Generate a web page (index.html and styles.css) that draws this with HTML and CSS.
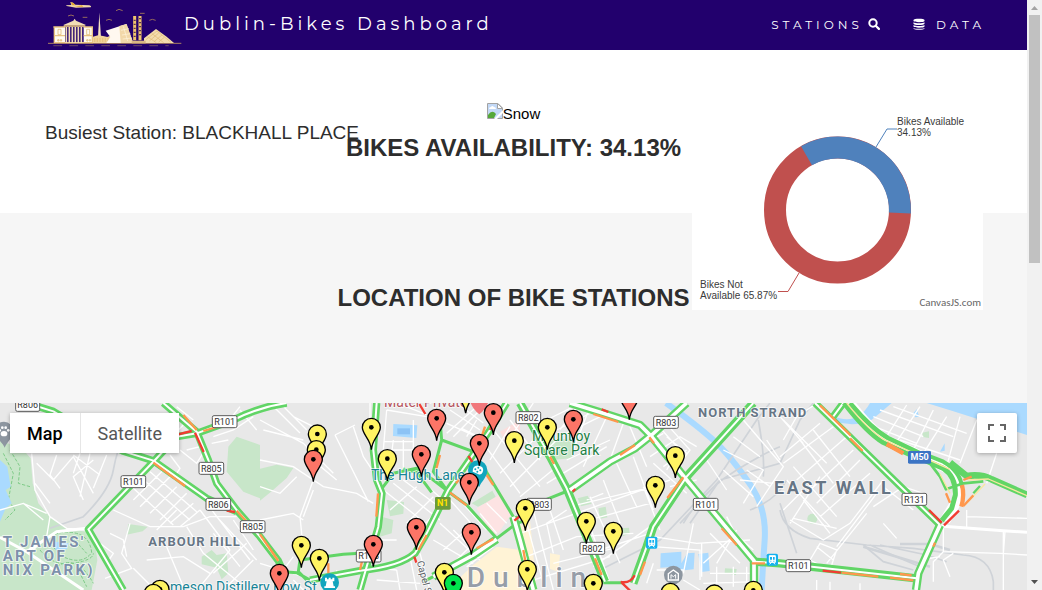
FILE: index.html
```html
<!DOCTYPE html>
<html lang="en">
<head>
<meta charset="utf-8">
<title>Dublin-Bikes Dashboard</title>
<link rel="stylesheet" href="styles.css">
</head>
<body>
<div class="page">
  <header class="navbar">
    <a class="brand" href="#top">
      <svg class="skyline" viewBox="0 0 450 150" aria-hidden="true">
        <path d="M24 133H424" stroke="#a97f62" stroke-width="3"/>
        <path d="M40 140H386" stroke="#5b3969" stroke-width="4" stroke-dasharray="26 22"/>
        <path d="M78 19l16-1-3-9 8 2 7 6 42 2q8 3 4 6l-44 1-28-5z" fill="#f0d7a8"/>
        <path d="M92 10l7 1 8 8h-10zM104 23l22-4 4 4z" fill="#e3a72b"/>
        <path d="M228 35l9-4 11 4M198 64l9-3 9 3M328 64l9-3 10 3M84 51l9-3 9 3M128 55h14M300 43h14" stroke="#94695d" stroke-width="3" fill="none"/>
        <path d="M42 84h33v48H42zM131 84h28v48h-28z" fill="#fffaf0"/>
        <path d="M40 84h35M131 84h28M42 110h33M131 110h28M42 131h117M43 84v48M157 84v48" stroke="#e9c483" stroke-width="4"/>
        <path d="M54 91h9v16h-9zM140 91h9v16h-9zM53 122h4v4h-4zM61 122h4v4h-4zM140 122h4v4h-4zM148 122h4v4h-4z" fill="none" stroke="#dcb05f" stroke-width="2"/>
        <path d="M70 78l30-13 4-6 4 6 30 13z" fill="#f3ddb6"/>
        <path d="M71 81h65" stroke="#e9c483" stroke-width="5"/>
        <path d="M79 84v48M88 84v48M97 84v48M106 84v48M115 84v48M124 84v48" stroke="#f3ddb6" stroke-width="5"/>
        <path d="M174 115l4-74 5 74z" fill="#f8e3c2"/>
        <path d="M159 113l15-4 15 2 13 3 12-5v23h-55z" fill="#f1d39a"/>
        <path d="M162 120h50M162 126h50" stroke="#ddab50" stroke-width="2" stroke-dasharray="4 4"/>
        <path d="M197 95l62-20 20 57h-80l12-18z" fill="#fff8f0"/>
        <path d="M238 81l22-6 20 57h-38z" fill="#f2d8a9"/>
        <path d="M250 82l13 44M243 94l24-5M246 108l25-4M248 120l28-3" stroke="#fff4dc" stroke-width="2"/>
        <path d="M284 51v73M300 51v73" stroke="#efc46d" stroke-width="9"/>
        <path d="M284 62v60M300 57v60" stroke="#5d3552" stroke-width="6" stroke-dasharray="4 8"/>
        <path d="M312 132v-14l36-28 32 23 22 19z" fill="#f3dcae"/>
        <path d="M318 122l33-26 42 34M328 126l28-24M342 128l24-20M356 129l17-14M322 113l27 18M335 103l36 28" stroke="#e0bb76" stroke-width="2" fill="none"/>
        <path d="M275 125h42v8h-42z" fill="#d9b783"/>
      </svg>
      <span>Dublin-Bikes Dashboard</span>
    </a>
    <nav class="links">
      <a href="#stations">STATIONS
        <svg class="icon" viewBox="0 0 12 12" aria-hidden="true"><circle cx="5" cy="5" r="3.7" fill="none" stroke="currentColor" stroke-width="2"/><path d="M7.7 7.7l3.2 3.2" stroke="currentColor" stroke-width="2.2" stroke-linecap="round"/></svg>
      </a>
      <a href="#data">
        <svg class="icon" viewBox="0 0 12 12" aria-hidden="true"><path d="M.5 2C.5.4 11.500.4 11.500 2v1c0 1.600-11 1.600-11 0zM.5 4.300c1.800 1.300 9.200 1.300 11 0v1.500c0 1.600-11 1.600-11 0zM.5 7.100c1.800 1.300 9.200 1.300 11 0v1.500c0 1.600-11 1.600-11 0zM.5 9.900c1.800 1.200 9.200 1.200 11 0v.6c0 1.700-11 1.700-11 0z" fill="currentColor"/></svg>
        DATA</a>
    </nav>
  </header>

  <main id="top">
    <section class="availability">
      <p class="busiest">Busiest Station: BLACKHALL PLACE</p>
      <div class="photo">
        <svg viewBox="0 0 16 16" aria-hidden="true"><path d="M.5.5h10.500l4.500 4.500v10.500H.5z" fill="#c3d9f7" stroke="#a3a3a3"/><path d="M2 6q0-2 2-2 1-2 3 0 2 0 2 2z" fill="#fff"/><path d="M1 15v-3q4-6 8-1l-2 4z" fill="#55a839"/><path d="M7 16l9-9v3l-6 6z" fill="#fff"/><path d="M10.500.5v5h5z" fill="#fff" stroke="#a3a3a3"/></svg><span>Snow</span>
      </div>
      <h2>BIKES AVAILABILITY: 34.13%</h2>
      <figure class="chart">
        <svg viewBox="692 110 291 200" role="img" aria-label="Bike availability">
          <circle cx="837.500" cy="210" r="62.500" fill="none" stroke="#c0504e" stroke-width="22"/>
          <path d="M806.500 155.700A62.500 62.500 0 0 1 899.900 213" fill="none" stroke="#4f81bc" stroke-width="22"/>
          <path d="M876 147l11-18h10" fill="none" stroke="#4f81bc"/>
          <path d="M799 273l-11 18.500h-10" fill="none" stroke="#c0504e"/>
          <text class="slice" x="897" y="125">Bikes Available<tspan x="897" dy="11">34.13%</tspan></text>
          <text class="slice" x="700" y="288">Bikes Not<tspan x="700" dy="11">Available 65.87%</tspan></text>
          <text class="credit" x="981" y="306">CanvasJS.com</text>
        </svg>
      </figure>
    </section>
    <section class="location" id="stations"><h2>LOCATION OF BIKE STATIONS</h2></section>

    <section class="map">
      <svg class="tiles" viewBox="0 9 3081 561" preserveAspectRatio="xMinYMin slice" role="img" aria-label="Map of Dublin bike stations">
        <defs>
          <g id="pin" stroke="#000" stroke-width="4"><path d="M0 67C-2 35-27 22-27 0A27 27 0 0 1 27 0C27 22 2 35 0 67z"/><circle r="7" fill="#000" stroke="none"/></g>
          <g id="train"><rect x="-17" y="-18" width="34" height="36" rx="5" fill="#14b1ee"/><path d="M-9-12H9V8H-9zM-8 14l5-6M8 14l-5-6" fill="#fff" stroke="#fff" stroke-width="3"/><path d="M-7-8H-1V0H-7zM2-8H7V0H2zM-6 3h3v3h-3zM3 3h3v3H3z" fill="#14b1ee"/></g>
        </defs>
        <rect width="3081" height="600" fill="#e8e8e8"/>

        <!-- parks -->
        <g fill="#c8e6c9">
          <path d="M0 120L70 150 92 175 98 250 115 310 150 350 200 385 262 396 285 430 292 480 275 570H0z"/>
          <path d="M685 140l25-30 70 25v160l-50-20-50-60zM780 206l50-12 50 10-20 30-45 40-35 28z"/>
          <path d="M385 372l58 8-15 14-48 10zM605 470l30-20 15 15 30-5 5 60-20 18-15-35-45-10z"/>
          <path d="M1160 300l52 6-2 35-40 8zM1145 350l35 10-5 40-35 10z"/>
          <path d="M1650 120l75-5-10 60-60 5z"/><path d="M1415 310l62-38 12 22-55 26zM1733 295l30-8 12 24-32 8zM1795 325l22-5 5 32-22 4zM1865 385l22-2 2 18-22 8zM2175 505l35 2-2 18-34-6zM2767 98l20-4v20l-18-3z"/>
          <circle cx="2437" cy="356" r="15"/>
        </g>
        <path d="M10 160l30 60-15 80 20 30-30 30M30 150l30 50-5 50 35 10M140 420q30-30 80-22t55 60q-30 40-90 10zM120 450q40 50 100 40t60-30M170 500q60-40 110 50M230 500l30 60M215 410l45 50" fill="none" stroke="#7fcb88" stroke-width="3" stroke-dasharray="10 5"/>

        <!-- water -->
        <g fill="#aadaff">
          <path d="M0 180l22 20 10 60-15 10 18 40-18 15-17 40zM165 425l40 5-4 18-35 2zM1180 72l72 4-3 38-70-6z"/>
          <path d="M2780 9l80 25 80 25 141 46V9zM2500 48q70 32 110-39h65q-40 35-60 50-50 25-115 4z"/>
          <path d="M1982 460l62-5v35l18-30 22-2-3 50-50 5-10-12-40 2zM2095 462l30-4 4 55-25 3zM2740 40l10-12 8 22-12 2zM2820 155l14-25v22z"/>
        </g>
        <path d="M1998 9Q2090 75 2140 120T2255 260Q2300 330 2294 420T2285 570" fill="none" stroke="#aadaff" stroke-width="18"/>
        <path d="M1192 85h38v18h-38z" fill="#8cc3f5"/>
        <path d="M1430 325l75-45 30 60-40 60-20 5z" fill="#fde3e3"/>
        <path d="M1500 95l60-35v60l-40 15z" fill="#fbdedd"/>
        <path d="M1340 570l80-75 70-55 70 10 10-70 20-20 20 210z" fill="#fff3d6"/>
        <path d="M1545 380l40-10 15 70-40 10zM1650 460l30 5-5 50-25-8z" fill="#fff3d6"/>

        <!-- railway -->
        <g fill="none" stroke="#cfd3d8" stroke-width="5">
          <path d="M385 70Q350 150 340 210T250 350L150 385M1800 510L1980 420 2150 240 2270 60 2310 9M2040 370l120-130 180-50 60-130 40-51M2050 370q60-100 160-160t130-70M2275 60q20 110 15 170M2160 240l-90 130M2250 330q80-30 110-90M2340 330q10 60 90 85l170 20 140 10 150 20q80 5 90 80v30M2340 310q20 60 50 150M2590 435l60 50 90 25M2610 435l90 40 60 25M2640 435l140 30 60 20"/>
          <path d="M2590 440l200 60M2700 432h90l60 18" stroke-width="8"/>
        </g>

        <!-- local streets -->
        <g class="streets">
          <path d="M95 160l10 110 45 80 50 35 65 5M150 350l-10 60-50 50M0 330l70-20 70 30M70 310l60 50M105 250l45 60M110 190l50 50 60-70 60 110M170 165l-20 60 30 40M220 165l80 60M240 160l-20 60M250 300l-30-70 60-50M270 160l-30 130M340 330l110 50 100 0 80-30 80 0M390 370l-25 90 30 45-80 30M320 165l-40 100M300 430l40 30-20 30M330 400l40 20 10 50"/>
          <path d="M0 412L80 455 250 570M80 455l90-60 90-10" stroke-width="9"/>
          <path d="M400 300l90-90M420 320l90-90M450 340l80-80M480 360l80-80M510 370l70-60M540 380l60-50M420 230l150 130M400 265l120 110M450 215l140 120M470 390l60-60M640 400l80 100M600 330l90 120M620 310l130 170M650 350l120 130M560 380l50 80 110 90M700 360l60 90M500 440l50 120M440 480l110-10 80 50M400 505l60 60M640 520l100-90M680 560l80-80M600 560l90-110"/>
          <path d="M510 165l30 40-20 30M540 150l50 40 25-40M640 110l60-20 60-40M680 70l40-50M720 30l50 60M530 20l50 40M560 150l40-10M635 130l50-10M550 75l-30 30"/>
          <path d="M780 60l130 70 90 90M780 180l100 20 90 60 100 20 50 30M810 9l90 90M840 9l80 80M790 90l120 30M880 50l60 30M940 240l-40 110 5 50M780 360l100-20 30 20M910 350l30-80M1005 105l60-30M1005 105l100 200M1060 80l30 90 40 60M950 190l60 50M780 260l60 20 50-50M905 400v70M780 490l130 40M880 470l-60 80"/>
          <path d="M1110 9v80M1160 30l-10 120h90M1150 125h90M1170 200l10-80M1190 9l90 35M1160 30l120 20M1210 120v90M1240 60v110M1340 70l90 40M1350 30l90 60M1370 9l80 60M1340 100l90-80M1360 110l90-90M1400 110l30-50M1385 85l60 30M1150 270l140 110M1180 250l140 110M1210 240l120 90M1250 230l90 80M1170 330l80-70M1220 370l80-80M1260 390l70-80M1350 300l90 100M1370 290l90 100M1320 370l120 110M1300 420l120 70M1330 450l80-70M1360 490l80-80M1400 500l80-60M1090 500l100 10M1100 420h90M1130 540l130 10M1010 510v60M880 540l30 30M1230 470l20 100M1260 460l30 110M1190 510l10 60M1420 450l-60-60M1440 340l50 60M1460 310l60 60"/>
          <path d="M1430 150l60-100M1470 180l60-100M1500 220l110-110M1530 260l150-150M1560 290l110-90M1450 130l110 150M1480 90l140 170M1530 60l90 120M1600 9l-60 90M1640 60l100-50M1670 90l120-60M1680 110l140-70M1640 250l180-110M1700 180l130-60M1720 260l80-50M1740 9l-60 80M1770 20l-50 130M1820 50l-70 150M1870 70l-40 110M1890 80l50 120M1920 140l70-40M1950 170l90-60 50 30M1990 200l70-50M2000 210l40-70M1960 60l70 80M1980 50l90 100-30 40M2000 110l60 50"/>
          <path d="M1560 400l450-160M1580 470l150-60 170-10M1600 540l230-70M1660 490l180-45M1710 320l250-60M1730 370l220-60M1780 500l170-120M1800 450l150-50M1900 170l60 160M1930 260l50 130M1850 190l60 130M1810 240l50 130M1770 290l90 200M1760 350l70 200M1740 380l60 140M1700 330l-60 40 20 90M1640 300l50 150M1600 330l60 240M1580 370l50 180M1760 300l50-20M1960 190l100 90M2010 260l80-20M1960 410l130 20 160-10M1960 440l140 10v90M1960 490l-20 60M2050 540l50 30M2105 430v100"/>
          <path d="M1970 510h80M2080 370l-30 150M2110 490l100-90M2150 490l60-100M2130 400l90 90M2170 370l90 80M2130 520h130M2150 500v70M2200 500v60M2240 500v50M2110 550l160-5M2180 350l30 60M2230 60l120 140-80 120M2200 110l80 60M2170 150l120 60-60 100M2240 210l70 50M2170 210l90 80M2300 120l40 60M2220 240l100 10M2120 180l60 90"/>
          <path d="M2340 170l120-100M2350 60l130 130M2350 190l150-110M2390 240l150-130M2420 280l140-130M2450 310l130-130M2460 350l150-130M2400 120l100 130M2440 90l110 140M2380 200l130 150M2360 240l130 140M2370 370l90-140M2380 355l130 30M2410 300l80 100M2350 330l60-60M2370 360l100 60 80-50 100-130M2480 490l120-150M2510 440l120-160M2430 480l30-50 50 20-20 60zM2450 440l50 40M2350 120l40-70 60-40M2340 50l70 80"/>
          <path d="M2600 70l150 60M2620 50l150 60M2640 30l220 80M2680 20l220 80M2720 15l-70 110M2760 20l-80 120M2800 30l-60 120M2840 50l-70 110M2880 50l-40 150M2930 60l-50 130M2700 120l180 60M2650 370l40 45M2650 260l90 70M2620 320l90-60 60 20M2900 330v55M2900 350l181 5M3015 395l-5 65M2830 385v70l170 5 81 5M2860 460l-30 20 20 50M2830 455l-30 30v60M2960 250l30-90M3010 395v175M2760 480l60-10M2450 540v30M2490 545v25M2580 550v20"/>
          <path d="M2820 378l190 14 71 5" stroke-width="9"/>
        </g>

        <!-- main roads: traffic colour with the carriageway on top -->
        <g class="road">
          <path d="M860 9Q780 20 700 60L590 100 530 110 465 180 265 388 370 570"/>
          <path d="M490 9L590 95 625 180 650 250 710 330 780 410 835 482 850 515"/>
          <path d="M80 9l80 25 100 60 110 60 90 28L620 295 710 335"/>
          <path d="M1130 9L1120 150 1130 240 1146 280 1135 380 1100 500 1080 570"/>
          <path d="M1520 9L1470 90 1415 170 1345 270 1280 400 1245 460Q1200 500 1080 512L930 540"/>
          <path d="M2445 9L2820 375M2530 9l-30 40"/>
          <g class="wide">
            <path d="M1710 9L1810 40 1920 75 1955 110 2060 240 2262 482V570"/>
            <path d="M2060 9L1955 105 1905 145 1830 185 1710 270"/>
            <path d="M1560 9L1650 170 1700 265 1815 545"/>
            <path d="M2260 9L2060 230 1960 380 1940 440 1900 550"/>
            <path d="M2262 485L2340 490 2750 535M2820 375L2755 520 2748 570"/>
            <path d="M1540 350L1560 420 1600 570M1490 418L1420 465 1300 530"/>
          </g>
        </g>
        <g class="lane">
          <path d="M1146 265L1180 220 1250 205 1300 240 1345 275M1320 60L1325 120 1300 215 1340 270M1325 120L1420 155M1450 200L1540 350M1345 275L1400 315 1490 415 1550 370 1580 360M1300 530l-30 15M900 480L1030 463 1080 460M850 515L890 518 930 540M900 480l-5 35 25 25M1640 298l70-28M1810 548h60M1210 207l40 10 45 60"/>
        </g>
        <g class="road-core">
          <path d="M860 9Q780 20 700 60L590 100 530 110 465 180 265 388 370 570"/>
          <path d="M490 9L590 95 625 180 650 250 710 330 780 410 835 482"/>
          <path d="M80 9l80 25 100 60 110 60 90 28L620 295 700 335"/>
          <path d="M1130 9L1120 150 1130 240 1146 280 1135 380 1100 500 1080 570"/>
          <path d="M1520 9L1470 90 1415 170 1345 270 1280 400 1245 460Q1200 500 1080 512L930 540"/>
          <path d="M1560 9L1650 170 1700 265 1815 545M2260 9L2060 230 1960 380 1940 440 1900 550M2262 485L2340 490 2750 535M2445 9L2820 375M2530 9l-30 40"/>
          <g class="wide">
            <path d="M1710 9L1810 40 1920 75 1955 110 2060 240 2262 482V570"/>
            <path d="M2060 9L1955 105 1905 145 1830 185 1710 270M2820 375L2755 520 2748 570M1540 350L1560 420 1600 570M1490 418L1420 465 1300 530"/>
          </g>
        </g>

        <!-- motorway -->
        <g fill="none" stroke-linejoin="round">
          <path d="M2548 9Q2610 90 2660 122L2790 180 2850 208Q2882 240 2872 300L2835 362" stroke="#fff" stroke-width="32"/>
          <path d="M2550 9Q2612 84 2664 114L2760 160" stroke="#61d566" stroke-width="14"/>
          <path d="M2532 9Q2600 98 2650 128L2760 178" stroke="#61d566" stroke-width="14"/>
          <path d="M2760 175L2830 205Q2868 230 2866 285L2855 325 2825 362" stroke="#61d566" stroke-width="15"/>
          <path d="M2780 165L2830 185Q2882 215 2886 262" stroke="#61d566" stroke-width="12"/>
          <path d="M2790 190L2820 230 2838 268 2890 250 2950 244" stroke="#61d566" stroke-width="8"/>
          <path d="M2850 188L2900 228Q2945 222 2975 238L3081 285" stroke="#61d566" stroke-width="20"/>
          <path d="M2540 9Q2606 92 2658 122L2770 172 2850 208M2905 240l60-3 116 50M2820 222L2850 280M2895 315L2955 252" stroke="#f8e7a0" stroke-width="4"/>
          <path d="M2660 132l50 28M2886 255q8 30-2 65" stroke="#ff974d" stroke-width="13"/>
          <path d="M2940 258l-20 22" stroke="#61d566" stroke-width="7"/>
        </g>

        <!-- slow traffic -->
        <g fill="none" stroke="#ff974d" stroke-width="7">
          <path d="M550 45l40 45M610 93l40-12M460 188l95 70M710 332l60 65M780 403l55 80M1134 280l-5 70M985 490v30M1080 510l8-35M1320 165l-12 45M1368 250l22-30M1350 278l50 38M1280 405l-25 45M1430 445l50-28M1460 225l20 30M1445 110l10-30M1780 42l75 24M1905 135l-45 30M1948 112l14 18M2050 232l-48 62M1785 475l20 50M1935 485l-15 40M2165 385l45 50M2460 16l92 90M2550 115l38 38M2670 533l70 8M2525 518l110 12M2700 522l35 4M2800 440l5-12M2890 240l25-10M2890 318l30-32M2838 280l12 28M2255 490h40M1570 450l8 45M1650 170l12 22"/>
        </g>
        <g fill="none" stroke="#f23c32" stroke-width="7">
          <path d="M535 103l40-10M585 98l26 58M680 332l25 4M1258 12l18 30M1405 168l12 18M1470 90l10-20M1243 470l6 18M2787 330l38 38M2832 376l45-44M2468 512l55 6M1862 546q30 5 42-20M1865 548l25 24M1543 362l17-14M1718 275l8-8M1805 28l20 8"/>
        </g>

        <!-- place names -->
        <g class="area" font-size="39" letter-spacing="3">
          <text x="445" y="437">ARBOUR HILL</text>
          <text x="2094" y="52">NORTH STRAND</text>
        </g>
        <text class="area" x="2322" y="283" font-size="54" letter-spacing="8">EAST WALL</text>
        <g class="area soft" font-size="45" letter-spacing="7"><text x="8" y="441">T JAMES'</text><text x="8" y="483">ART OF</text><text x="8" y="525">NIX PARK)</text></g>
        <text class="city" x="1400" y="560">Dublin</text>
        <g class="poi teal"><text x="1113" y="240">The Hugh Lane</text><text x="510" y="576">meson Distillery Bow St</text></g>
        <g class="poi green"><text x="1596" y="122">Mountjoy</text><text x="1572" y="164">Square Park</text></g>
        <text class="poi rose" x="1152" y="20">Mater Private</text>
        <text class="street-name" transform="translate(1250 485) rotate(75)">Capel St</text>

        <!-- route shields -->
        <g class="shields">
          <g><rect x="47" y="-2" width="72" height="36" rx="5"/><text x="83" y="25">R806</text></g>
          <g><rect x="637" y="47" width="74" height="36" rx="5"/><text x="674" y="75">R101</text></g>
          <g><rect x="597" y="187" width="74" height="36" rx="5"/><text x="634" y="215">R805</text></g>
          <g><rect x="363" y="227" width="74" height="36" rx="5"/><text x="400" y="255">R101</text></g>
          <g><rect x="618" y="295" width="74" height="36" rx="5"/><text x="655" y="323">R806</text></g>
          <g><rect x="721" y="362" width="74" height="36" rx="5"/><text x="758" y="390">R805</text></g>
          <g><rect x="1069" y="450" width="74" height="36" rx="5"/><text x="1106" y="478">R108</text></g>
          <g><rect x="1548" y="35" width="74" height="36" rx="5"/><text x="1585" y="63">R802</text></g>
          <g><rect x="1961" y="49" width="74" height="36" rx="5"/><text x="1998" y="77">R803</text></g>
          <g><rect x="1580" y="295" width="74" height="36" rx="5"/><text x="1617" y="323">R803</text></g>
          <g><rect x="1740" y="427" width="74" height="36" rx="5"/><text x="1777" y="455">R802</text></g>
          <g><rect x="2080" y="295" width="74" height="36" rx="5"/><text x="2117" y="323">R101</text></g>
          <g><rect x="2706" y="280" width="74" height="36" rx="5"/><text x="2743" y="308">R131</text></g>
          <g><rect x="2358" y="479" width="74" height="36" rx="5"/><text x="2395" y="507">R101</text></g>
        </g>
        <g class="badges">
          <rect x="1305" y="291" width="47" height="38" rx="4" fill="#6b9a3a"/><text x="1328" y="319" fill="#ffe100">N1</text>
          <rect x="2724" y="153" width="69" height="38" rx="4" fill="#3b74c4"/><text x="2759" y="181" fill="#fff">M50</text>
        </g>

        <!-- points of interest -->
        <use href="#train" x="1955" y="428"/><use href="#train" x="2317" y="479"/>
        <g transform="translate(1432 210)"><path d="M5 52C0 35-28 20-28 0A28 28 0 0 1 30 0C30 22 12 34 5 52z" fill="#12a5bd"/><path d="M-14 5q0-20 18-18t12 20q-5 10-14 5t-16-7z" fill="#fff"/><g fill="#12a5bd"><circle cx="-6" cy="-2" r="3"/><circle cx="3" cy="-7" r="3"/><circle cx="9" cy="1" r="3"/><circle cx="0" cy="5" r="3"/></g></g>
        <g transform="translate(989 548)"><circle r="28" fill="#12a5bd"/><path d="M-14-15h6v5h5v-5h6v5h5v-5h6V-4h-5l3 15h4v5h-32v-5h4l3-15h-5z" fill="#fff"/></g>
        <g transform="translate(2020 525)"><circle r="28" fill="#8d96a0"/><path d="M-15-4L0-15 15-4V15H-15z" fill="none" stroke="#fff" stroke-width="4"/><path d="M-7 11V-1L0 5 7-1V11" fill="none" stroke="#fff" stroke-width="3"/></g>
        <g transform="translate(12 93)"><path d="M2 50C-4 34-28 20-28 0A28 28 0 0 1 28 0C28 20 8 34 2 50z" fill="#8d96a0"/><g fill="#fff"><ellipse cy="8" rx="10" ry="8"/><circle cx="-13" cy="-2" r="4"/><circle cx="-5" cy="-10" r="4"/><circle cx="5" cy="-10" r="4"/><circle cx="13" cy="-2" r="4"/></g></g>
        <path d="M1412 9h52q-8 20-26 34-18-14-26-34z" fill="#f1777b"/>

        <!-- station pins -->
        <g fill="#fff463">
          <use href="#pin" x="480" y="568"/><use href="#pin" x="460" y="580"/>
          <use href="#pin" x="952" y="102"/><use href="#pin" x="949" y="149"/><use href="#pin" x="1114" y="82"/><use href="#pin" x="1162" y="176"/><use href="#pin" x="1397" y="-27"/><use href="#pin" x="1543" y="122"/><use href="#pin" x="904" y="436"/><use href="#pin" x="958" y="475"/><use href="#pin" x="1333" y="517"/>
          <use href="#pin" x="1642" y="82"/><use href="#pin" x="2026" y="167"/><use href="#pin" x="1966" y="256"/><use href="#pin" x="1576" y="325"/><use href="#pin" x="1759" y="364"/><use href="#pin" x="1840" y="394"/><use href="#pin" x="1582" y="508"/><use href="#pin" x="1780" y="550"/><use href="#pin" x="2011" y="577"/><use href="#pin" x="2143" y="582"/><use href="#pin" x="2260" y="571"/>
        </g>
        <g fill="#fd7567">
          <use href="#pin" x="940" y="178"/><use href="#pin" x="1310" y="55"/><use href="#pin" x="1264" y="163"/><use href="#pin" x="1480" y="38"/><use href="#pin" x="1438" y="130"/><use href="#pin" x="1408" y="247"/><use href="#pin" x="1249" y="382"/><use href="#pin" x="1414" y="397"/><use href="#pin" x="1120" y="433"/><use href="#pin" x="838" y="520"/><use href="#pin" x="1720" y="58"/><use href="#pin" x="1888" y="-8"/>
        </g>
        <use href="#pin" x="1360" y="550" fill="#00e64d"/>
      </svg>
      <div class="map-type"><button class="on" type="button">Map</button><button type="button">Satellite</button></div>
      <button class="fullscreen" type="button" aria-label="Toggle fullscreen view"><svg viewBox="0 0 18 18" aria-hidden="true"><path d="M1 6V1h5M12 1h5v5M17 12v5h-5M6 17H1v-5" fill="none" stroke="#666" stroke-width="2"/></svg></button>
    </section>
  </main>
</div>
<div class="scrollbar" aria-hidden="true">
  <svg viewBox="0 0 15 15"><path d="M4 10l3.500-4L11 10z" fill="#a3a3a3"/></svg>
  <div class="thumb"></div>
  <svg viewBox="0 0 15 15"><path d="M4 5l3.500 4L11 5z" fill="#505050"/></svg>
</div>
</body>
</html>
```
FILE: styles.css
```css
* { box-sizing: border-box; }
body {
  margin: 0;
  display: flex;
  height: 100vh;
  overflow: hidden;
  background: #fff;
  color: #2d2d2d;
  font-family: "Liberation Sans", Arial, sans-serif;
}
.page { flex: 1; min-width: 0; display: flex; flex-direction: column; }
main { flex: 1; min-height: 0; display: flex; flex-direction: column; }

.navbar {
  display: flex;
  align-items: center;
  justify-content: space-between;
  height: 50px;
  padding: 0 42px 2px 40px;
  background: #22006d;
  font-family: Montserrat, Inter, sans-serif;
}
.navbar a { color: #fff; text-decoration: none; }
.brand { display: flex; align-items: center; font-size: 18px; font-weight: 400; letter-spacing: 4px; }
.skyline { width: 150px; height: 50px; margin-right: -6px; }
.links { display: flex; gap: 33px; font-size: 12px; font-weight: 400; letter-spacing: 4px; }
.links a { display: flex; align-items: center; gap: 5px; }
.links a + a { gap: 11px; }
.icon { width: 12px; height: 12px; }

.availability { position: relative; padding: 50px 0; text-align: center; }
.photo {
  display: flex;
  align-items: center;
  justify-content: center;
  height: 26px;
  color: #000;
  font-size: 15px;
}
.photo svg { width: 16px; height: 16px; margin-top: -4px; }
h2 { margin: 0; font-size: 24px; line-height: 28px; font-weight: 700; }
.availability h2 { margin-top: 7px; line-height: 30px; }
.busiest { position: absolute; left: 45px; top: 71px; margin: 0; font-size: 19px; line-height: 24px; }
.chart { position: absolute; z-index: 1; top: 60px; right: 44px; width: 291px; margin: 0; background: #fff; }
.chart svg { display: block; width: 100%; }
.slice { font-size: 10px; fill: #3a3a3a; }
.credit { font-family: Carlito, Lato, sans-serif; font-size: 11px; fill: #666; text-anchor: end; }
.location { padding: 71px 0 91px; background: #f6f6f6; text-align: center; }

.map { position: relative; flex: 1; min-height: 0; overflow: hidden; font-family: Roboto, sans-serif; }
.tiles { display: block; width: 100%; height: 100%; }
.streets { fill: none; stroke: #fff; stroke-width: 4; }
.road, .road-core, .lane { fill: none; stroke-linejoin: round; }
.road { stroke: #61d566; stroke-width: 22; }
.road .wide { stroke-width: 25; }
.road-core { stroke: #fff; stroke-width: 6; }
.road-core .wide { stroke-width: 11; }
.lane { stroke: #61d566; stroke-width: 9; }
.area, .city, .poi, .street-name { stroke: #fff; stroke-width: 5; stroke-opacity: 0.8; paint-order: stroke; }
.area { fill: #667585; font-weight: 700; }
.soft { fill: #7d90ab; }
.city { fill: #969da8; font-size: 84px; font-weight: 500; letter-spacing: 24px; }
.poi { font-size: 42px; }
.teal { fill: #168496; }
.green { fill: #228044; }
.rose { fill: #b5545d; }
.street-name { fill: #5d6268; font-size: 30px; }
.shields rect { fill: #fff; stroke: #5c5c5c; stroke-width: 3; }
.shields text { fill: #333; font-size: 27px; text-anchor: middle; }
.badges text { font-size: 27px; font-weight: 700; text-anchor: middle; }

.map-type { position: absolute; left: 10px; top: 10px; display: flex; box-shadow: 0 1px 4px rgba(0, 0, 0, 0.3); }
.map-type button {
  height: 40px;
  padding: 0 17px;
  border: 0;
  background: #fff;
  color: #565656;
  font: 18px Roboto, sans-serif;
}
.map-type .on { color: #000; font-weight: 500; border-right: 1px solid #e6e6e6; }
.fullscreen {
  position: absolute;
  right: 10px;
  top: 10px;
  display: grid;
  place-items: center;
  width: 40px;
  height: 40px;
  padding: 0;
  border: 0;
  border-radius: 2px;
  background: #fff;
  box-shadow: 0 1px 4px rgba(0, 0, 0, 0.3);
}
.fullscreen svg { width: 18px; height: 18px; }

.scrollbar { display: flex; flex-direction: column; width: 15px; background: #f1f1f1; }
.scrollbar svg { width: 15px; height: 15px; }
.thumb { height: 42%; margin: 0 2px auto; background: #c1c1c1; }
```
